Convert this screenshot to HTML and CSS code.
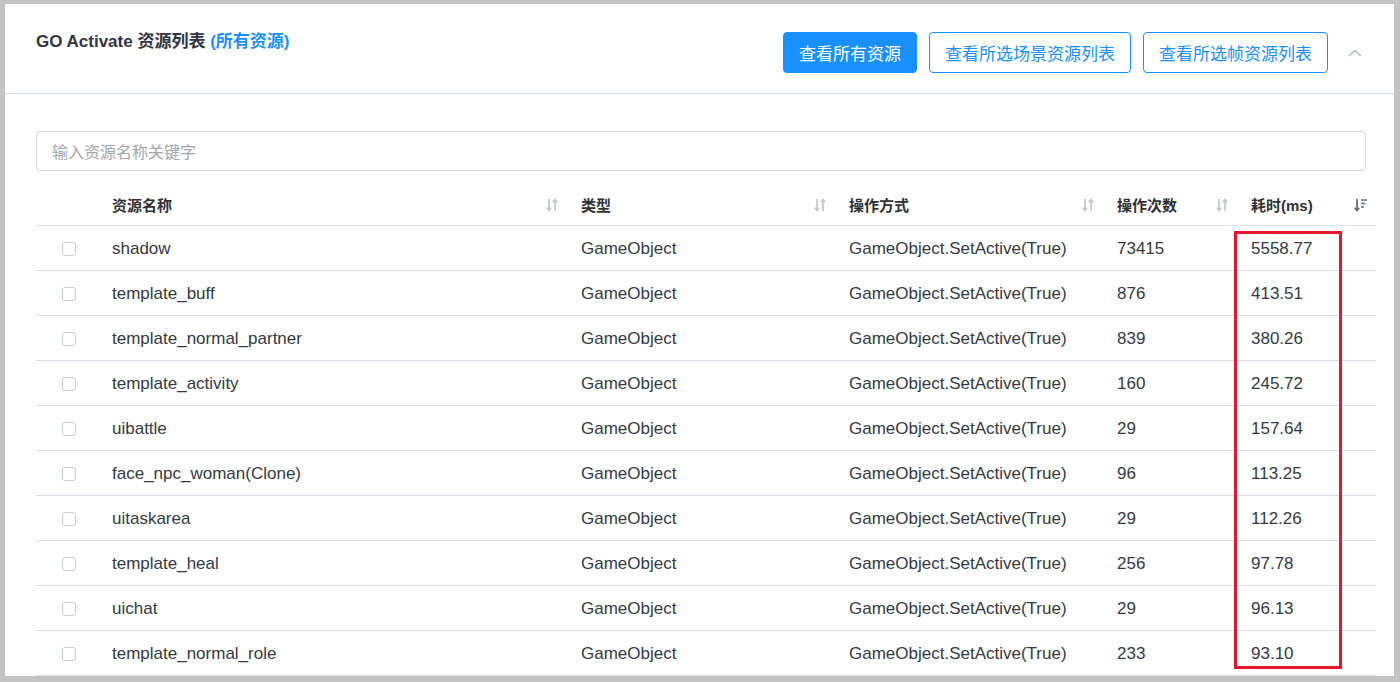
FILE: index.html
```html
<!DOCTYPE html>
<html lang="zh">
<head>
<meta charset="utf-8">
<title>GO Activate 资源列表</title>
<link rel="stylesheet" href="styles.css">
</head>
<body>
<div class="frame">
  <div class="card">
    <div class="card-header">
      <div class="title">GO Activate 资源列表 <span class="title-sub">(所有资源)</span></div>
      <div class="actions">
        <button class="btn btn-primary">查看所有资源</button>
        <button class="btn btn-outline">查看所选场景资源列表</button>
        <button class="btn btn-outline">查看所选帧资源列表</button>
        <span class="collapse">
          <svg width="14" height="8" viewBox="0 0 14 8"><path d="M1 7 L7 1.5 L13 7" fill="none" stroke="#b4b8bf" stroke-width="1.4"/></svg>
        </span>
      </div>
    </div>
    <div class="card-body">
      <div class="search"><input class="search-input" type="text" placeholder="输入资源名称关键字"></div>
      <div class="table-wrap">
        <table class="table">
          <colgroup>
            <col class="c-check"><col class="c-name"><col class="c-type"><col class="c-op"><col class="c-count"><col class="c-time">
          </colgroup>
          <thead>
            <tr>
              <th></th>
              <th><div class="th-inner"><span>资源名称</span><svg class="sort" width="12" height="14" viewBox="0 0 12 14"><path d="M3 1 V12.5 M0.8 9.8 L3 12.5 L5.2 9.8 M9 13 V1.5 M6.8 4.2 L9 1.5 L11.2 4.2" fill="none" stroke="#c6c9cf" stroke-width="1.8"/></svg></div></th>
              <th><div class="th-inner"><span>类型</span><svg class="sort" width="12" height="14" viewBox="0 0 12 14"><path d="M3 1 V12.5 M0.8 9.8 L3 12.5 L5.2 9.8 M9 13 V1.5 M6.8 4.2 L9 1.5 L11.2 4.2" fill="none" stroke="#c6c9cf" stroke-width="1.8"/></svg></div></th>
              <th><div class="th-inner"><span>操作方式</span><svg class="sort" width="12" height="14" viewBox="0 0 12 14"><path d="M3 1 V12.5 M0.8 9.8 L3 12.5 L5.2 9.8 M9 13 V1.5 M6.8 4.2 L9 1.5 L11.2 4.2" fill="none" stroke="#c6c9cf" stroke-width="1.8"/></svg></div></th>
              <th><div class="th-inner"><span>操作次数</span><svg class="sort" width="12" height="14" viewBox="0 0 12 14"><path d="M3 1 V12.5 M0.8 9.8 L3 12.5 L5.2 9.8 M9 13 V1.5 M6.8 4.2 L9 1.5 L11.2 4.2" fill="none" stroke="#c6c9cf" stroke-width="1.8"/></svg></div></th>
              <th><div class="th-inner"><span>耗时(ms)</span><svg class="sort" width="14" height="14" viewBox="0 0 14 14"><path d="M3 1 V12.5 M0.8 9.8 L3 12.5 L5.2 9.8" fill="none" stroke="#6b6f76" stroke-width="1.8"/><path d="M7 2 H13 M7 5.5 H11.5 M7 9 H10" fill="none" stroke="#6b6f76" stroke-width="1.5"/></svg></div></th>
            </tr>
          </thead>
          <tbody>
            <tr><td><span class="checkbox"></span></td><td>shadow</td><td>GameObject</td><td>GameObject.SetActive(True)</td><td>73415</td><td>5558.77</td></tr>
            <tr><td><span class="checkbox"></span></td><td>template_buff</td><td>GameObject</td><td>GameObject.SetActive(True)</td><td>876</td><td>413.51</td></tr>
            <tr><td><span class="checkbox"></span></td><td>template_normal_partner</td><td>GameObject</td><td>GameObject.SetActive(True)</td><td>839</td><td>380.26</td></tr>
            <tr><td><span class="checkbox"></span></td><td>template_activity</td><td>GameObject</td><td>GameObject.SetActive(True)</td><td>160</td><td>245.72</td></tr>
            <tr><td><span class="checkbox"></span></td><td>uibattle</td><td>GameObject</td><td>GameObject.SetActive(True)</td><td>29</td><td>157.64</td></tr>
            <tr><td><span class="checkbox"></span></td><td>face_npc_woman(Clone)</td><td>GameObject</td><td>GameObject.SetActive(True)</td><td>96</td><td>113.25</td></tr>
            <tr><td><span class="checkbox"></span></td><td>uitaskarea</td><td>GameObject</td><td>GameObject.SetActive(True)</td><td>29</td><td>112.26</td></tr>
            <tr><td><span class="checkbox"></span></td><td>template_heal</td><td>GameObject</td><td>GameObject.SetActive(True)</td><td>256</td><td>97.78</td></tr>
            <tr><td><span class="checkbox"></span></td><td>uichat</td><td>GameObject</td><td>GameObject.SetActive(True)</td><td>29</td><td>96.13</td></tr>
            <tr><td><span class="checkbox"></span></td><td>template_normal_role</td><td>GameObject</td><td>GameObject.SetActive(True)</td><td>233</td><td>93.10</td></tr>
          </tbody>
        </table>
        <div class="highlight"></div>
      </div>
    </div>
  </div>
</div>
</body>
</html>
```

FILE: styles.css
```css
html, body {
  margin: 0;
  padding: 0;
  background: #ffffff;
}
body {
  width: 1400px;
  height: 682px;
  overflow: hidden;
  font-family: "Liberation Sans", "Noto Sans CJK SC", Arial, sans-serif;
  color: #303133;
}
.frame {
  box-sizing: border-box;
  width: 1400px;
  height: 682px;
  border-style: solid;
  border-color: #c3c3c3;
  border-width: 4px 6px 6px 5px;
  overflow: hidden;
  background: #ffffff;
}
.card {
  height: 100%;
  overflow: hidden;
}
.card-header {
  box-sizing: border-box;
  height: 90px;
  border-bottom: 1px solid #d6e0ea;
  display: flex;
  justify-content: space-between;
  align-items: flex-start;
  padding: 0 0 0 31px;
}
.title {
  margin-top: 27px;
  font-size: 17px;
  line-height: 22px;
  font-weight: bold;
  color: #2f3542;
}
.title-sub {
  color: #1890ff;
}
.actions {
  margin-top: 28px;
  display: flex;
  align-items: center;
  gap: 12px;
}
.btn {
  box-sizing: border-box;
  height: 41px;
  padding: 0 15px;
  font-family: "Noto Sans CJK SC", "Liberation Sans", sans-serif;
  font-size: 17px;
  border-radius: 4px;
  border: 1px solid #1890ff;
  margin: 0;
  cursor: pointer;
}
.btn-primary {
  background: #1890ff;
  color: #ffffff;
}
.btn-outline {
  background: #ffffff;
  color: #1890ff;
}
.collapse {
  display: flex;
  align-items: center;
  justify-content: center;
  width: 28px;
  height: 41px;
  margin-left: 1px;
  margin-right: 25px;
}
.card-body {
  padding: 37px 18px 0 31px;
}
.search {
  padding-right: 10px;
}
.search-input {
  box-sizing: border-box;
  width: 100%;
  height: 40px;
  border: 1px solid #d4d7de;
  border-radius: 4px;
  padding: 0 15px;
  font-family: "Noto Sans CJK SC", "Liberation Sans", sans-serif;
  font-size: 16px;
  color: #303133;
  outline: none;
}
.search-input::placeholder {
  color: #a3a6ad;
}
.table-wrap {
  position: relative;
  margin-top: 13px;
}
.table {
  width: 1340px;
  table-layout: fixed;
  border-collapse: collapse;
}
.c-check { width: 61px; }
.c-name { width: 469px; }
.c-type { width: 268px; }
.c-op { width: 268px; }
.c-count { width: 134px; }
.c-time { width: 140px; }
.table th {
  height: 41px;
  padding: 0 0 0 15px;
  text-align: left;
  font-size: 15px;
  font-weight: bold;
  color: #303133;
  border-bottom: 1px solid #dde3ea;
}
.th-inner {
  display: flex;
  align-items: center;
  justify-content: space-between;
  padding-right: 8px;
}
.th-inner span {
  font-family: "Noto Sans CJK SC", "Liberation Sans", sans-serif;
}
.table th:last-child .th-inner span {
  font-family: "Liberation Sans", "Noto Sans CJK SC", sans-serif;
}
.sort {
  display: block;
}
.table td {
  height: 42px;
  padding: 2px 0 0 15px;
  font-size: 17px;
  color: #333a44;
  border-bottom: 1px solid #d5dde8;
  white-space: nowrap;
}
.table td:first-child,
.table th:first-child {
  padding-left: 26px;
}
.checkbox {
  display: block;
  box-sizing: border-box;
  width: 14px;
  height: 14px;
  border: 1px solid #c8ccd3;
  border-radius: 3px;
  background: #ffffff;
}
.highlight {
  position: absolute;
  left: 1198px;
  top: 47px;
  width: 108px;
  height: 438px;
  box-sizing: border-box;
  border: 3px solid #e5162e;
  pointer-events: none;
}
```
